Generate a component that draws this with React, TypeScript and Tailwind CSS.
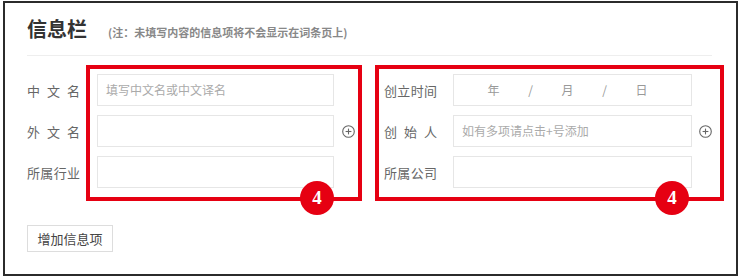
import React from "react";

const cjk = { fontFamily: '"Noto Sans CJK SC", "Noto Sans", sans-serif' };

function Plus() {
  return (
    <svg width="13" height="13" viewBox="0 0 13 13" className="block">
      <circle cx="6.5" cy="6.5" r="5.8" fill="none" stroke="#666" strokeWidth="1.1" />
      <line x1="3.6" y1="6.5" x2="9.4" y2="6.5" stroke="#666" strokeWidth="1.1" />
      <line x1="6.5" y1="3.6" x2="6.5" y2="9.4" stroke="#666" strokeWidth="1.1" />
    </svg>
  );
}

function Label({ chars }: { chars: string[] }) {
  return (
    <div className="flex w-[53px] justify-between text-[13px] text-[#666] leading-none">
      {chars.map((c, i) => (
        <span key={i}>{c}</span>
      ))}
    </div>
  );
}

function Badge({ className }: { className: string }) {
  return (
    <div
      className={`absolute w-[34px] h-[34px] rounded-full bg-[#e60012] flex items-center justify-center text-white text-[19px] font-bold ${className}`}
      style={{ fontFamily: '"Liberation Serif", serif' }}
    >
      4
    </div>
  );
}

export default function App() {
  return (
    <div className="w-[740px] h-[278px] bg-white pt-[1px] pl-[3px]" style={cjk}>
      <div className="relative w-[735px] h-[275px] border-2 border-[#2b2b2b] pl-[22px]">
        <div className="flex items-baseline h-[52px] pt-[12px]">
          <span className="text-[20px] font-bold text-[#333] leading-[28px]">信息栏</span>
          <span className="ml-[21px] text-[11px] font-bold text-[#888]">(注：未填写内容的信息项将不会显示在词条页上)</span>
        </div>
        <div className="w-[685px] h-px bg-[#eeeeee]" />
        <div className="flex mt-[18px]">
          <div className="w-[357px] flex flex-col gap-[9px]">
            <div className="flex items-center h-[32px]">
              <Label chars={["中", "文", "名"]} />
              <div className="ml-[17px] w-[237px] h-[32px] border border-[#e6e6e6] pl-[8px] flex items-center text-[12px] text-[#aaa]">
                填写中文名或中文译名
              </div>
            </div>
            <div className="flex items-center h-[32px]">
              <Label chars={["外", "文", "名"]} />
              <div className="ml-[17px] w-[237px] h-[32px] border border-[#e6e6e6]" />
              <div className="ml-[8px]">
                <Plus />
              </div>
            </div>
            <div className="flex items-center h-[32px]">
              <Label chars={["所", "属", "行", "业"]} />
              <div className="ml-[17px] w-[237px] h-[32px] border border-[#e6e6e6]" />
            </div>
          </div>
          <div className="flex flex-col gap-[9px]">
            <div className="flex items-center h-[32px]">
              <Label chars={["创", "立", "时", "间"]} />
              <div className="ml-[16px] w-[239px] h-[32px] border border-[#e6e6e6] pl-[21px] flex items-center text-[12px] text-[#999]">
                <span className="w-[37px] text-center">年</span>
                <span className="w-[37px] text-center">/</span>
                <span className="w-[37px] text-center">月</span>
                <span className="w-[37px] text-center">/</span>
                <span className="w-[37px] text-center">日</span>
              </div>
            </div>
            <div className="flex items-center h-[32px]">
              <Label chars={["创", "始", "人"]} />
              <div className="ml-[16px] w-[239px] h-[32px] border border-[#e6e6e6] pl-[8px] flex items-center text-[12px] text-[#aaa]">
                如有多项请点击+号添加
              </div>
              <div className="ml-[7px]">
                <Plus />
              </div>
            </div>
            <div className="flex items-center h-[32px]">
              <Label chars={["所", "属", "公", "司"]} />
              <div className="ml-[16px] w-[239px] h-[32px] border border-[#e6e6e6]" />
            </div>
          </div>
        </div>
        <button className="mt-[37px] w-[86px] h-[27px] border border-[#dddddd] bg-white text-[13px] text-[#444] flex items-center justify-center">
          增加信息项
        </button>

        <div className="absolute left-[81px] top-[62px] w-[276px] h-[136px] border-4 border-[#e60012]" />
        <div className="absolute left-[370px] top-[62px] w-[349px] h-[136px] border-4 border-[#e60012]" />
        <Badge className="left-[295px] top-[178px]" />
        <Badge className="left-[650px] top-[178px]" />
      </div>
    </div>
  );
}
